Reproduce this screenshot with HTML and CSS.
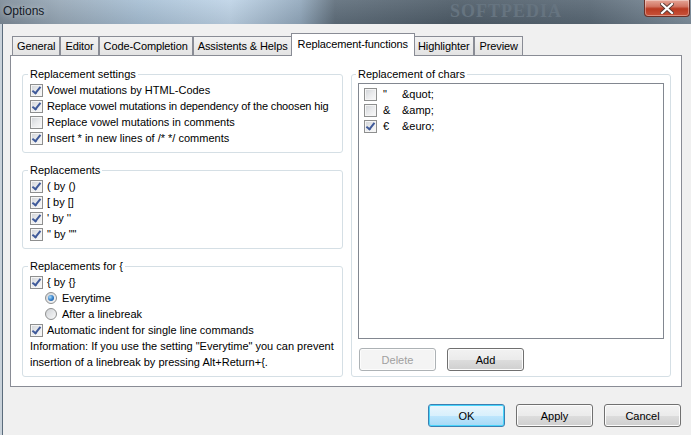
FILE: index.html
```html
<!DOCTYPE html>
<html lang="en">
<head>
    <meta charset="UTF-8">
    <meta name="viewport" content="width=device-width, initial-scale=1.0">
    <title>Options</title>
    <link rel="stylesheet" href="styles.css">
</head>
<body>
    <div class="window">
        <div class="titlebar">
            <span class="title">Options</span>
            <span class="watermark">SOFTPEDIA</span>
            <div class="close">
                <svg width="14" height="11" viewBox="0 0 14 11">
                    <path d="M2 1 L12 10 M12 1 L2 10" stroke="#5a3a34" stroke-width="4" stroke-linecap="square"/>
                    <path d="M2 1 L12 10 M12 1 L2 10" stroke="#ffffff" stroke-width="2.2" stroke-linecap="square"/>
                </svg>
            </div>
        </div>

        <div class="client">
            <div class="tabs">
                <div class="tab">General</div>
                <div class="tab">Editor</div>
                <div class="tab">Code-Completion</div>
                <div class="tab">Assistents &amp; Helps</div>
                <div class="tab active">Replacement-functions</div>
                <div class="tab">Highlighter</div>
                <div class="tab">Preview</div>
            </div>

            <div class="panel">
                <div class="col-left">
                    <fieldset class="group">
                        <legend>Replacement settings</legend>
                        <div class="row"><span class="cb on"></span>Vowel mutations by HTML-Codes</div>
                        <div class="row tight"><span class="cb on"></span>Replace vowel mutations in dependency of the choosen hig</div>
                        <div class="row"><span class="cb"></span>Replace vowel mutations in comments</div>
                        <div class="row"><span class="cb on"></span>Insert * in new lines of /* */ comments</div>
                    </fieldset>

                    <fieldset class="group">
                        <legend>Replacements</legend>
                        <div class="row"><span class="cb on"></span>( by ()</div>
                        <div class="row"><span class="cb on"></span>[ by []</div>
                        <div class="row"><span class="cb on"></span>' by ''</div>
                        <div class="row"><span class="cb on"></span>" by ""</div>
                    </fieldset>

                    <fieldset class="group">
                        <legend>Replacements for {</legend>
                        <div class="row"><span class="cb on"></span>{ by {}</div>
                        <div class="row sub"><span class="radio on"></span>Everytime</div>
                        <div class="row sub"><span class="radio"></span>After a linebreak</div>
                        <div class="row"><span class="cb on"></span>Automatic indent for single line commands</div>
                        <div class="row">Information: If you use the setting "Everytime" you can prevent</div>
                        <div class="row">insertion of a linebreak by pressing Alt+Return+{.</div>
                    </fieldset>
                </div>

                <div class="col-right">
                    <fieldset class="group chars">
                        <legend>Replacement of chars</legend>
                        <div class="listbox">
                            <div class="item"><span class="cb"></span><span class="char">"</span>&amp;quot;</div>
                            <div class="item"><span class="cb"></span><span class="char">&amp;</span>&amp;amp;</div>
                            <div class="item"><span class="cb on"></span><span class="char">€</span>&amp;euro;</div>
                        </div>
                        <div class="list-buttons">
                            <button class="btn" disabled>Delete</button>
                            <button class="btn">Add</button>
                        </div>
                    </fieldset>
                </div>
            </div>

            <div class="footer">
                <button class="btn default">OK</button>
                <button class="btn">Apply</button>
                <button class="btn">Cancel</button>
            </div>
        </div>
    </div>
</body>
</html>
```

FILE: styles.css
```css
* {
    margin: 0;
    padding: 0;
    box-sizing: border-box;
}
body {
    width: 691px;
    height: 435px;
    overflow: hidden;
    font-family: "Liberation Sans", Arial, sans-serif;
    font-size: 11px;
    color: #000;
    background: #f0f0f0;
}
.window {
    width: 691px;
    height: 435px;
}

/* title bar */
.titlebar {
    position: relative;
    height: 24px;
    overflow: hidden;
    background:
        linear-gradient(180deg, rgba(255, 255, 255, 0.08), rgba(0, 0, 0, 0.08)),
        linear-gradient(90deg, #7d8b98 0, #98a9b8 60px, #a7bfd4 140px, #bfd4e7 230px, #93a9bd 300px, #606f7c 335px, #4f5d69 450px, #5a6976 590px, #7f8f9d 691px);
}
.title {
    display: block;
    padding: 4px 0 0 3px;
    font-size: 12px;
    line-height: 15px;
    color: #141a26;
    text-shadow: 0 0 6px rgba(255, 255, 255, 0.6);
}
.watermark {
    position: absolute;
    left: 450px;
    top: 2px;
    font-family: "Liberation Serif", serif;
    font-weight: bold;
    font-size: 18px;
    line-height: 18px;
    letter-spacing: 1px;
    color: #667480;
}
.close {
    position: absolute;
    left: 644px;
    top: 0;
    width: 46px;
    height: 17px;
    display: flex;
    align-items: center;
    justify-content: center;
    border: 1px solid #6b3027;
    border-top: none;
    border-radius: 0 0 4px 4px;
    background: linear-gradient(180deg, #e5a597 0, #d27563 40%, #b93a22 55%, #c9533a 100%);
    box-shadow: inset 0 0 0 1px rgba(255, 255, 255, 0.35);
}

/* client area */
.client {
    height: 411px;
    padding-top: 9px;
    box-shadow: inset 2px 0 #c9d2da, inset 3px 0 #5b6c7c;
}
.tabs {
    display: flex;
    align-items: flex-end;
    height: 22px;
    padding-left: 12px;
}
.tab {
    height: 19px;
    padding: 2px 4px 0 4px;
    border: 1px solid #898c95;
    border-bottom: none;
    background: linear-gradient(180deg, #f2f2f2, #e3e3e3);
    white-space: nowrap;
    line-height: 14px;
    letter-spacing: -0.1px;
}
.tab.active {
    position: relative;
    z-index: 1;
    height: 23px;
    margin: 0 -2px -1px -2px;
    padding: 3px 6px 0 6px;
    background: #fff;
}

/* tab page */
.panel {
    display: flex;
    gap: 8px;
    width: 672px;
    height: 332px;
    margin-left: 10px;
    padding: 12px 10px 0 11px;
    background: #fff;
    border: 1px solid #898c95;
}
.col-left {
    display: flex;
    flex-direction: column;
    gap: 11px;
    width: 321px;
    min-width: 0;
}
.col-right {
    width: 320px;
    min-width: 0;
}
.group {
    min-width: 0;
    padding: 1px 7px 6px 7px;
    border: 1px solid #d5dfe5;
    border-radius: 3px;
}
.group legend {
    margin-left: -2px;
    padding: 0 2px;
    line-height: 13px;
}
.row {
    display: flex;
    align-items: center;
    height: 16px;
    white-space: nowrap;
    overflow: hidden;
}
.row.tight {
    letter-spacing: -0.15px;
}
.row.sub {
    padding-left: 15px;
}

/* checkbox and radio */
.cb {
    position: relative;
    flex: none;
    width: 13px;
    height: 13px;
    margin-right: 4px;
    border: 1px solid #8e8f8f;
    background: linear-gradient(135deg, #cfd2d6 0, #e9eaec 50%, #fafafa 100%);
    box-shadow: inset 0 0 0 1px #f5f5f5;
}
.cb.on::after {
    content: '';
    position: absolute;
    left: 3px;
    top: 0;
    width: 3px;
    height: 7px;
    border: solid #3f5a9a;
    border-width: 0 2px 2px 0;
    transform: rotate(38deg);
}
.radio {
    position: relative;
    flex: none;
    width: 12px;
    height: 12px;
    margin-right: 5px;
    border: 1px solid #8e8f8f;
    border-radius: 50%;
    background: linear-gradient(135deg, #cfd2d6, #fafafa);
}
.radio.on::after {
    content: '';
    position: absolute;
    left: 2px;
    top: 2px;
    width: 6px;
    height: 6px;
    border-radius: 50%;
    background: radial-gradient(circle at 35% 35%, #a9dcfb 0, #2f7bc7 55%, #184c8c 100%);
}

/* chars list */
.chars {
    padding: 1px 6px 5px 6px;
}
.listbox {
    height: 256px;
    margin-top: 1px;
    padding: 2px 5px;
    border: 1px solid #828790;
    background: #fff;
}
.item {
    display: flex;
    align-items: center;
    height: 16px;
}
.item .cb {
    margin-right: 6px;
}
.char {
    width: 19px;
}
.list-buttons {
    display: flex;
    gap: 11px;
    margin-top: 9px;
    padding-left: 1px;
}

/* buttons */
.btn {
    width: 77px;
    height: 23px;
    font-family: inherit;
    font-size: 11px;
    color: #000;
    border: 1px solid #707070;
    border-radius: 3px;
    background: linear-gradient(180deg, #f2f2f2 0, #ebebeb 50%, #dddddd 51%, #cfcfcf 100%);
    box-shadow: inset 0 0 0 1px #fcfcfc;
}
.btn:disabled {
    color: #a0a0a0;
    border-color: #adb2b5;
    background: #f4f4f4;
}
.btn.default {
    border-color: #3c7fb1;
    background: linear-gradient(180deg, #eaf6fd 0, #d9f0fc 50%, #bee6fd 51%, #a7d9f5 100%);
    box-shadow: inset 0 0 0 1px #48d4fb;
}
.footer {
    display: flex;
    justify-content: flex-end;
    gap: 11px;
    margin-top: 17px;
    padding-right: 10px;
}
```
